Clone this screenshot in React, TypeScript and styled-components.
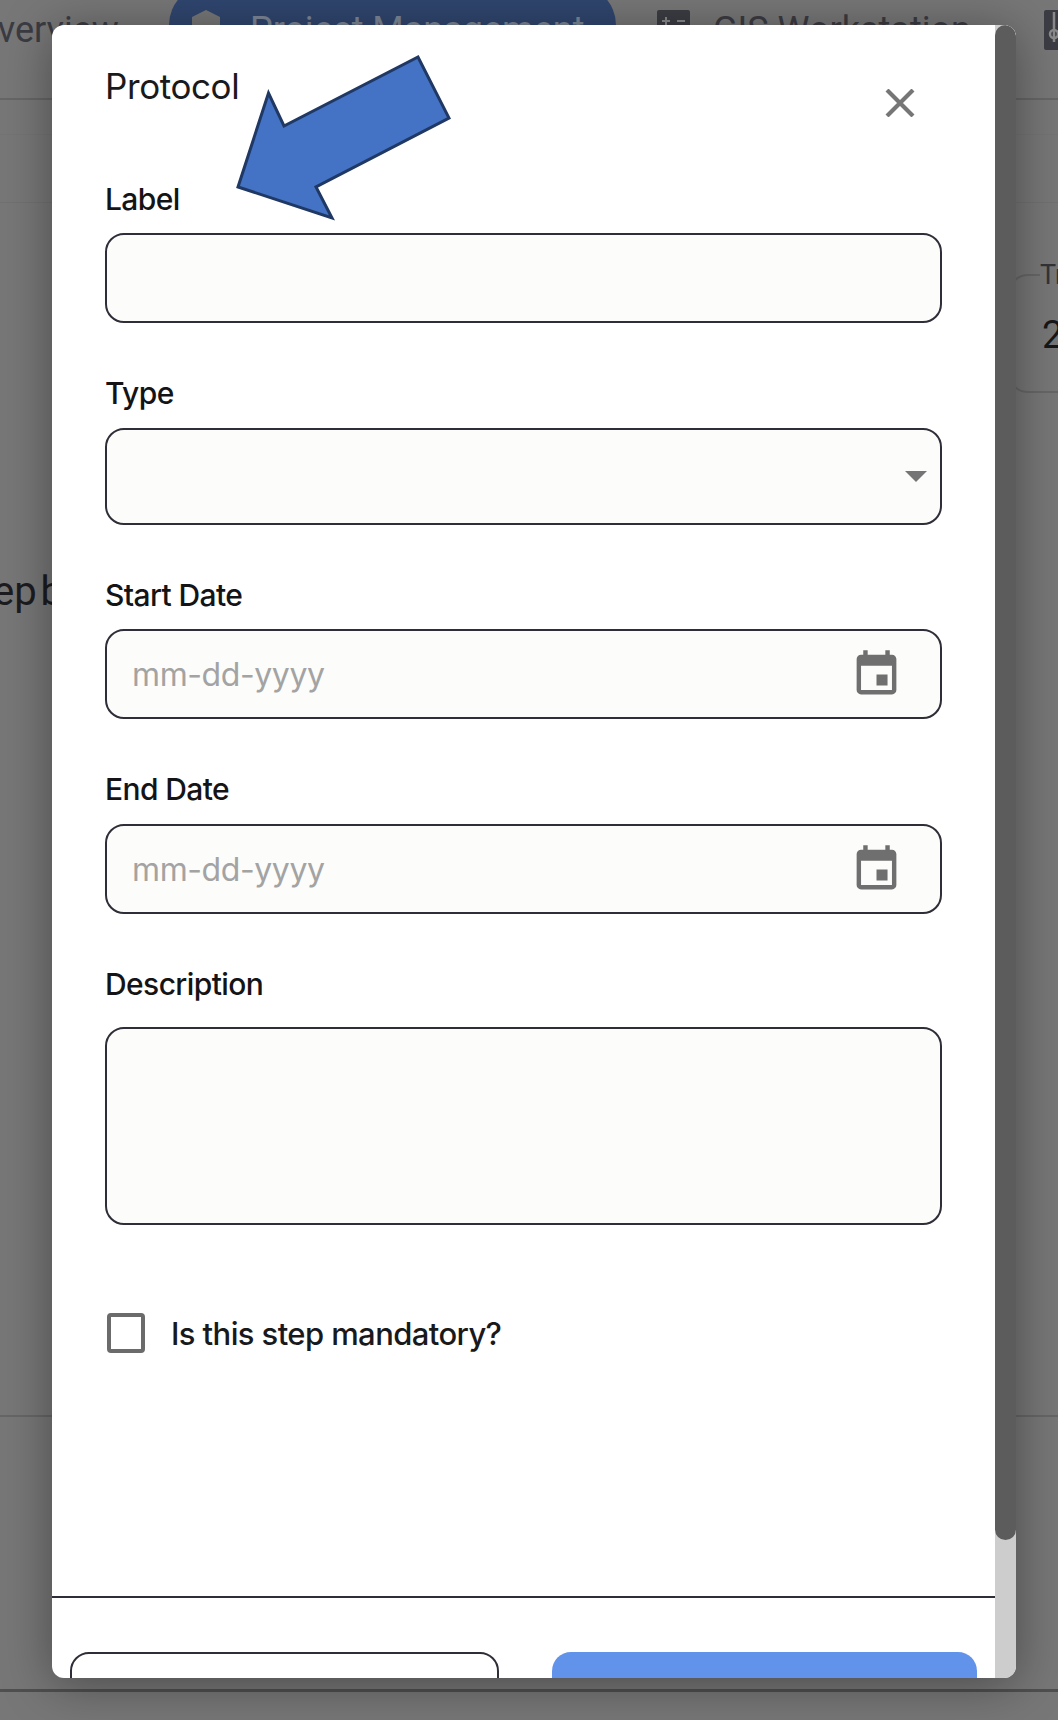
import React from "react";
import styled, { createGlobalStyle } from "styled-components";
import { MdEvent } from "react-icons/md";

const GlobalStyle = createGlobalStyle`
  html, body {
    margin: 0;
    padding: 0;
    background: #777777;
  }
  * {
    box-sizing: border-box;
  }
`;

const Page = styled.div`
  position: relative;
  width: 1058px;
  height: 1720px;
  overflow: hidden;
  display: flex;
  flex-direction: column;
  background: #777777;
  font-family: "Roboto", sans-serif;
`;

const TabBar = styled.div`
  height: 100px;
  flex: none;
  display: flex;
  align-items: flex-start;
  border-bottom: 2px solid #666666;
`;

const Tab = styled.div<{ $active?: boolean; $width: number; $pad: number }>`
  flex: none;
  width: ${(p) => p.$width}px;
  height: 90px;
  margin-top: -15px;
  padding-left: ${(p) => p.$pad}px;
  display: flex;
  align-items: center;
  gap: 23px;
  border-radius: 40px;
  background: ${(p) => (p.$active ? "#30466f" : "transparent")};
  color: ${(p) => (p.$active ? "#7d8796" : "#3b3b42")};
  font-size: 36px;
  white-space: nowrap;
`;

const OverviewTab = styled(Tab)`
  margin-left: -27px;
  margin-right: 27px;
`;

const SubBar = styled.div`
  height: 35px;
  flex: none;
  border-bottom: 1px solid #747474;
`;

const Band = styled.div`
  height: 68px;
  flex: none;
  border-bottom: 1px solid #717171;
`;

const Main = styled.div`
  height: 1214px;
  flex: none;
  display: flex;
  justify-content: space-between;
  align-items: flex-start;
  border-bottom: 2px solid #666666;
`;

const StepText = styled.div`
  margin: 365px 0 0 -7px;
  font-size: 40px;
  word-spacing: -6px;
  color: #1c1c20;
  white-space: nowrap;
`;

const StatCard = styled.fieldset`
  width: 120px;
  height: 134px;
  margin: 56px -70px 0 0;
  padding: 22px 0 0 32px;
  border: 2px solid #676767;
  border-radius: 20px;
  font-size: 38px;
  color: #17171a;
`;

const StatLegend = styled.legend`
  padding: 0;
  margin-left: -2px;
  font-size: 27px;
  color: #333338;
`;

const BottomArea = styled.div`
  height: 275px;
  flex: none;
  border-bottom: 3px solid #4f4f4f;
`;

const Modal = styled.div`
  position: absolute;
  top: 25px;
  left: 52px;
  width: 964px;
  height: 1653px;
  display: flex;
  overflow: hidden;
  border-radius: 12px;
  background: #ffffff;
  box-shadow: 0 6px 50px rgba(0, 0, 0, 0.38);
  font-family: "Inter", sans-serif;
`;

const ModalBody = styled.div`
  flex: 1;
  min-width: 0;
  display: flex;
  flex-direction: column;
`;

const ModalHeader = styled.div`
  height: 156px;
  flex: none;
  padding: 41px 73px 0 53px;
  display: flex;
  justify-content: space-between;
  align-items: flex-start;
`;

const Title = styled.h2`
  margin: 0;
  font-size: 35px;
  line-height: 40px;
  font-weight: 400;
  letter-spacing: -0.4px;
  color: #1a1a1c;
`;

const CloseButton = styled.button`
  width: 44px;
  height: 44px;
  margin-top: 15px;
  padding: 0;
  border: 0;
  background: none;
  display: flex;
  align-items: center;
  justify-content: center;
`;

const Form = styled.form`
  padding: 0 53px;
  display: flex;
  flex-direction: column;
  gap: 52px;
`;

const Field = styled.div`
  display: flex;
  flex-direction: column;
`;

const Label = styled.label<{ $gap: number }>`
  height: 36px;
  margin-bottom: ${(p) => p.$gap}px;
  font-size: 30px;
  line-height: 36px;
  font-weight: 450;
  letter-spacing: -0.6px;
  color: #141416;
`;

const Box = styled.div<{ $height: number }>`
  height: ${(p) => p.$height}px;
  display: flex;
  align-items: center;
  justify-content: flex-end;
  border: 2px solid #2e2e38;
  border-radius: 19px;
  background: #fcfcfa;
`;

const SelectBox = styled(Box)`
  padding-right: 13px;
`;

const Caret = styled.span`
  width: 0;
  height: 0;
  border-left: 11px solid transparent;
  border-right: 11px solid transparent;
  border-top: 11px solid #757575;
`;

const DateBox = styled(Box)`
  padding: 0 37px 0 25px;
  color: #6f6f6f;
`;

const DateInput = styled.input`
  flex: 1;
  min-width: 0;
  padding: 0;
  border: 0;
  outline: 0;
  background: none;
  font-family: "Inter", sans-serif;
  font-size: 32px;
  letter-spacing: -0.4px;

  &::placeholder {
    color: #a3a3a3;
    opacity: 1;
  }
`;

const CheckRow = styled.div`
  margin: 88px 0 243px 2px;
  display: flex;
  align-items: center;
  gap: 26px;
`;

const CheckBox = styled.input`
  width: 38px;
  height: 40px;
  margin: 0;
  flex: none;
  appearance: none;
  border: 4.5px solid #6b6b6b;
  border-radius: 4px;
  background: #ffffff;
`;

const CheckLabel = styled.label`
  font-size: 31px;
  font-weight: 450;
  letter-spacing: -0.6px;
  color: #19191c;
`;

const Footer = styled.div`
  flex: none;
  padding: 54px 18px 0;
  display: flex;
  gap: 53px;
  border-top: 2px solid #2e2e38;
`;

const FooterButton = styled.button<{ $primary?: boolean }>`
  flex: 1;
  height: 70px;
  padding: 0;
  border: ${(p) => (p.$primary ? "0" : "2px solid #2e2e38")};
  border-radius: 19px;
  background: ${(p) => (p.$primary ? "#6193ea" : "#ffffff")};
`;

const ScrollTrack = styled.div`
  width: 21px;
  flex: none;
  background: #cdcdcd;
`;

const ScrollThumb = styled.div`
  height: 1515px;
  border-radius: 11px;
  background: #5c5c5c;
`;

const Arrow = styled.svg`
  position: absolute;
  top: 50px;
  left: 230px;
  width: 230px;
  height: 175px;
`;

const TabIcon = styled.svg<{ $after?: number }>`
  flex: none;
  margin-right: ${(p) => p.$after ?? 0}px;
`;

const PinIcon = () => (
  <TabIcon $after={7} width="28" height="40" viewBox="0 0 28 40">
    <path d="M14 0l14 7v33H0V7z" fill="#777777" />
  </TabIcon>
);

const CalcIcon = () => (
  <TabIcon width="33" height="40" viewBox="0 0 33 40">
    <rect width="33" height="40" rx="2" fill="#3c3c44" />
    <path d="M5 11h8M9 7v8M20 11h8" stroke="#8a8a8a" strokeWidth="2" fill="none" />
  </TabIcon>
);

const TuneIcon = () => (
  <TabIcon width="33" height="40" viewBox="0 0 33 40">
    <rect width="33" height="40" rx="2" fill="#3c3c44" />
    <path d="M10 2v30" stroke="#8a8a8a" strokeWidth="2.5" fill="none" />
    <circle cx="10" cy="24" r="4" fill="none" stroke="#8a8a8a" strokeWidth="2.5" />
  </TabIcon>
);

const App: React.FC = () => {
  return (
    <Page>
      <GlobalStyle />
      <TabBar>
        <OverviewTab $width={169} $pad={0}>
          Overview
        </OverviewTab>
        <Tab $active $width={447} $pad={23}>
          <PinIcon />
          Project Management
        </Tab>
        <Tab $width={428} $pad={41}>
          <CalcIcon />
          GIS Workstation
        </Tab>
        <Tab $width={60} $pad={0}>
          <TuneIcon />
        </Tab>
      </TabBar>
      <SubBar />
      <Band />
      <Main>
        <StepText>ep b</StepText>
        <StatCard>
          <StatLegend>Tr</StatLegend>2
        </StatCard>
      </Main>
      <BottomArea />

      <Modal>
        <ModalBody>
          <ModalHeader>
            <Title>Protocol</Title>
            <CloseButton aria-label="Close">
              <svg width="30" height="28" viewBox="0 0 30 28">
                <path d="M2 1l26 26M28 1L2 27" stroke="#767676" strokeWidth="4.2" fill="none" />
              </svg>
            </CloseButton>
          </ModalHeader>
          <Form>
            <Field>
              <Label $gap={16}>Label</Label>
              <Box $height={90} />
            </Field>
            <Field>
              <Label $gap={17}>Type</Label>
              <SelectBox $height={97}>
                <Caret />
              </SelectBox>
            </Field>
            <Field>
              <Label $gap={16}>Start Date</Label>
              <DateBox $height={90}>
                <DateInput placeholder="mm-dd-yyyy" />
                <MdEvent size={53} />
              </DateBox>
            </Field>
            <Field>
              <Label $gap={17}>End Date</Label>
              <DateBox $height={90}>
                <DateInput placeholder="mm-dd-yyyy" />
                <MdEvent size={53} />
              </DateBox>
            </Field>
            <Field>
              <Label $gap={25}>Description</Label>
              <Box $height={198} />
            </Field>
          </Form>
          <Form as="div">
            <CheckRow>
              <CheckBox type="checkbox" />
              <CheckLabel>Is this step mandatory?</CheckLabel>
            </CheckRow>
          </Form>
          <Footer>
            <FooterButton />
            <FooterButton $primary />
          </Footer>
        </ModalBody>
        <ScrollTrack>
          <ScrollThumb />
        </ScrollTrack>
      </Modal>

      <Arrow viewBox="230 50 230 175">
        <path
          d="M238 187L268.5 93L284 126L418 57L449 118L316 187L332 218Z"
          fill="#4472c4"
          stroke="#1f3864"
          strokeWidth="3"
        />
      </Arrow>
    </Page>
  );
};

export default App;
